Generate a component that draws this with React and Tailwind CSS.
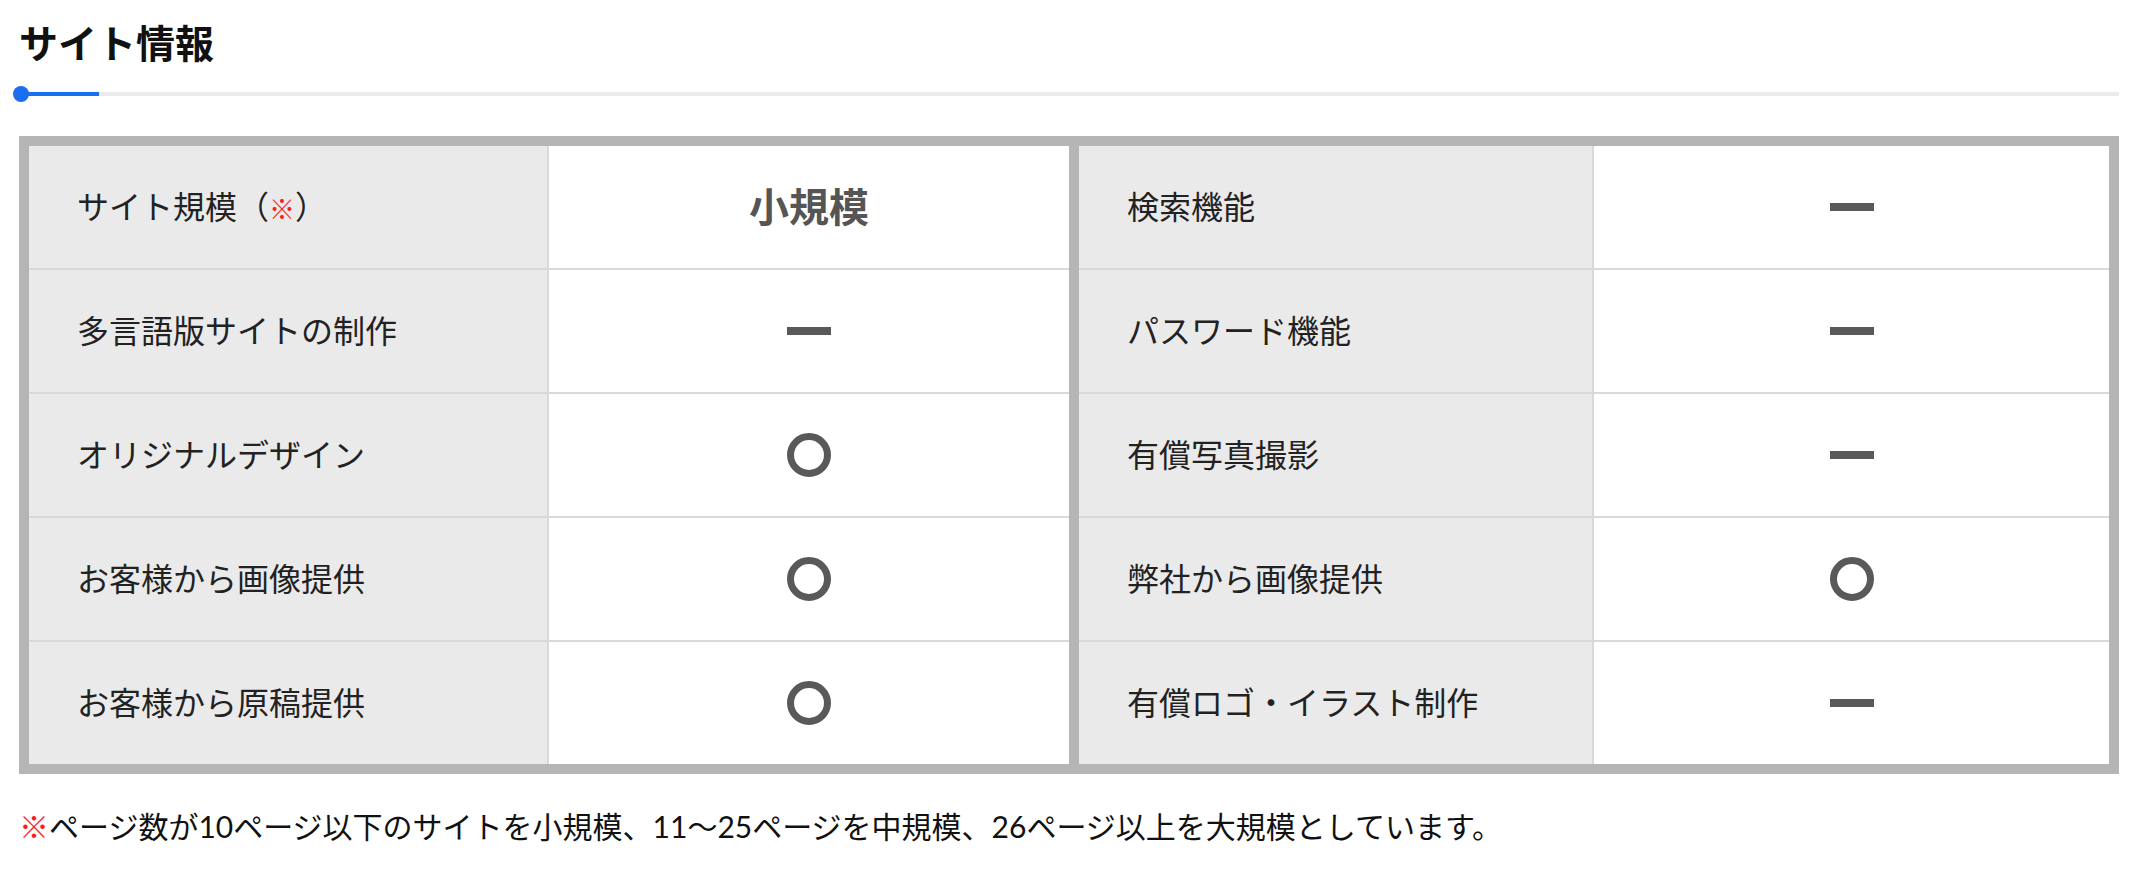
import React from "react";

const FONT = { fontFamily: 'Lato, "Noto Sans CJK JP", sans-serif' };

function Dash() {
  return <div className="w-[44px] h-[8px] bg-[#595959]" />;
}

function Circle() {
  return <div className="w-[44px] h-[44px] rounded-full border-[7px] border-[#595959]" />;
}

function Row({ label, value }) {
  return (
    <div className="flex h-[124px] border-b-2 border-[#d9d9d9] last:border-b-0 last:h-[122px]">
      <div className="w-1/2 flex items-center pl-[48px] bg-[#eaeaea] border-r-2 border-[#d9d9d9] text-[32px] text-[#222]">
        {label}
      </div>
      <div className="w-1/2 flex items-center justify-center bg-white">{value}</div>
    </div>
  );
}

export default function App() {
  const left = [
    {
      label: (
        <span>
          サイト規模（<span className="text-[26px] text-[#ff1a1a]">※</span>）
        </span>
      ),
      value: <span className="text-[40px] font-bold text-[#555]">小規模</span>,
    },
    { label: "多言語版サイトの制作", value: <Dash /> },
    { label: "オリジナルデザイン", value: <Circle /> },
    { label: "お客様から画像提供", value: <Circle /> },
    { label: "お客様から原稿提供", value: <Circle /> },
  ];
  const right = [
    { label: "検索機能", value: <Dash /> },
    { label: "パスワード機能", value: <Dash /> },
    { label: "有償写真撮影", value: <Dash /> },
    { label: "弊社から画像提供", value: <Circle /> },
    { label: "有償ロゴ・イラスト制作", value: <Dash /> },
  ];

  return (
    <div className="bg-white w-[2144px] h-[870px] pl-[19px]" style={FONT}>
      <h2 className="pt-[24px] text-[39px] leading-[38px] font-bold text-[#111]">サイト情報</h2>
      <div className="relative mt-[30px] w-[2100px] h-[4px] bg-[#ebebeb]">
        <div className="w-[80px] h-[4px] bg-[#1a6ff0]" />
        <div className="absolute left-[-6px] top-[-6px] w-[16px] h-[16px] rounded-full bg-[#1a6ff0]" />
      </div>
      <div className="mt-[40px] w-[2100px] border-[10px] border-[#b5b5b5] bg-[#b5b5b5] flex gap-[10px]">
        <div className="w-[1040px] flex flex-col">
          {left.map((r, i) => (
            <Row key={i} label={r.label} value={r.value} />
          ))}
        </div>
        <div className="w-[1030px] flex flex-col">
          {right.map((r, i) => (
            <Row key={i} label={r.label} value={r.value} />
          ))}
        </div>
      </div>
      <p className="mt-[30px] text-[30px] leading-[45px] text-[#111]">
        <span className="text-[#ff1a1a]">※</span>
        ページ数が10ページ以下のサイトを小規模、11〜25ページを中規模、26ページ以上を大規模としています。
      </p>
    </div>
  );
}
